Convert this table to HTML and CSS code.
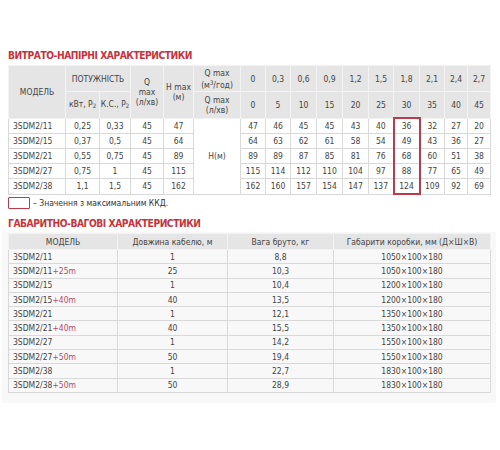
FILE: index.html
```html
<!DOCTYPE html>
<html lang="uk">
<head>
<meta charset="utf-8">
<link rel="stylesheet" href="styles.css">
</head>
<body>
<div class="page">
  <h2 class="title t1">ВИТРАТО-НАПІРНІ ХАРАКТЕРИСТИКИ</h2>
  <table class="perf">
    <colgroup>
      <col style="width:57px"><col style="width:34px"><col style="width:31px"><col style="width:33px"><col style="width:30px"><col style="width:47px">
      <col style="width:25px"><col style="width:25px"><col style="width:26px"><col style="width:26px"><col style="width:26px"><col style="width:25px"><col style="width:26px"><col style="width:25px"><col style="width:23px"><col style="width:23px">
    </colgroup>
    <thead>
      <tr class="h">
        <th rowspan="2">МОДЕЛЬ</th>
        <th colspan="2">ПОТУЖНІСТЬ</th>
        <th rowspan="2">Q<br>max<br>(л/хв)</th>
        <th rowspan="2">H max<br>(м)</th>
        <th>Q max<br>(м<sup>3</sup>/год)</th>
        <th>0</th><th>0,3</th><th>0,6</th><th>0,9</th><th>1,2</th><th>1,5</th><th>1,8</th><th>2,1</th><th>2,4</th><th>2,7</th>
      </tr>
      <tr class="h">
        <th>кВт, P<sub>2</sub></th>
        <th>К.С., P<sub>2</sub></th>
        <th>Q max<br>(л/хв)</th>
        <th>0</th><th>5</th><th>10</th><th>15</th><th>20</th><th>25</th><th>30</th><th>35</th><th>40</th><th>45</th>
      </tr>
    </thead>
    <tbody>
      <tr><td class="m">3SDM2/11</td><td>0,25</td><td>0,33</td><td>45</td><td>47</td><td rowspan="5">H(м)</td><td>47</td><td>46</td><td>45</td><td>45</td><td>43</td><td>40</td><td class="best first">36</td><td>32</td><td>27</td><td>20</td></tr>
      <tr><td class="m">3SDM2/15</td><td>0,37</td><td>0,5</td><td>45</td><td>64</td><td>64</td><td>63</td><td>62</td><td>61</td><td>58</td><td>54</td><td class="best">49</td><td>43</td><td>36</td><td>27</td></tr>
      <tr><td class="m">3SDM2/21</td><td>0,55</td><td>0,75</td><td>45</td><td>89</td><td>89</td><td>89</td><td>87</td><td>85</td><td>81</td><td>76</td><td class="best">68</td><td>60</td><td>51</td><td>38</td></tr>
      <tr><td class="m">3SDM2/27</td><td>0,75</td><td>1</td><td>45</td><td>115</td><td>115</td><td>114</td><td>112</td><td>110</td><td>104</td><td>97</td><td class="best">88</td><td>77</td><td>65</td><td>49</td></tr>
      <tr><td class="m">3SDM2/38</td><td>1,1</td><td>1,5</td><td>45</td><td>162</td><td>162</td><td>160</td><td>157</td><td>154</td><td>147</td><td>137</td><td class="best last">124</td><td>109</td><td>92</td><td>69</td></tr>
    </tbody>
  </table>
  <div class="legend"><span class="lbox"></span><span class="ltext">– Значення з максимальним ККД.</span></div>

  <h2 class="title t2">ГАБАРИТНО-ВАГОВІ ХАРАКТЕРИСТИКИ</h2>
  <div class="card">
    <table class="dims">
      <colgroup><col style="width:109px"><col style="width:110px"><col style="width:106px"><col style="width:157px"></colgroup>
      <thead>
        <tr><th>МОДЕЛЬ</th><th>Довжина кабелю, м</th><th>Вага бруто, кг</th><th>Габарити коробки, мм (Д×Ш×В)</th></tr>
      </thead>
      <tbody>
        <tr><td class="m">3SDM2/11</td><td>1</td><td>8,8</td><td>1050×100×180</td></tr>
        <tr><td class="m">3SDM2/11<span class="plus">+25m</span></td><td>25</td><td>10,3</td><td>1050×100×180</td></tr>
        <tr><td class="m">3SDM2/15</td><td>1</td><td>10,4</td><td>1200×100×180</td></tr>
        <tr><td class="m">3SDM2/15<span class="plus">+40m</span></td><td>40</td><td>13,5</td><td>1200×100×180</td></tr>
        <tr><td class="m">3SDM2/21</td><td>1</td><td>12,1</td><td>1350×100×180</td></tr>
        <tr><td class="m">3SDM2/21<span class="plus">+40m</span></td><td>40</td><td>15,5</td><td>1350×100×180</td></tr>
        <tr><td class="m">3SDM2/27</td><td>1</td><td>14,2</td><td>1550×100×180</td></tr>
        <tr><td class="m">3SDM2/27<span class="plus">+50m</span></td><td>50</td><td>19,4</td><td>1550×100×180</td></tr>
        <tr><td class="m">3SDM2/38</td><td>1</td><td>22,7</td><td>1830×100×180</td></tr>
        <tr><td class="m">3SDM2/38<span class="plus">+50m</span></td><td>50</td><td>28,9</td><td>1830×100×180</td></tr>
      </tbody>
    </table>
  </div>
</div>
</body>
</html>
```
FILE: styles.css
```css
html, body {
  margin: 0;
  padding: 0;
  background: #ffffff;
}
body {
  font-family: "Liberation Sans Narrow", "DejaVu Sans Condensed", "Liberation Sans", sans-serif;
  color: #444444;
}
.page {
  padding: 49px 0 0 0;
}
.title {
  margin: 0 0 0 8px;
  font-size: 10.2px;
  line-height: 14px;
  font-weight: bold;
  color: #c8323c;
  letter-spacing: -0.45px;
}
.t1 { margin-bottom: 2px; }
table {
  border-collapse: collapse;
  table-layout: fixed;
  margin-left: 8px;
  width: 482px;
  font-size: 8.5px;
}
th, td {
  padding: 0;
  text-align: center;
  vertical-align: middle;
  overflow: hidden;
  white-space: nowrap;
}
th {
  font-weight: normal;
  background: #e5e5e5;
  border: 1px solid #f3f3f3;
  line-height: 10px;
}
td {
  border: 1px solid #d9d9d9;
  line-height: 10px;
}
.perf tr.h th { height: 25px; }
.perf tbody td { height: 14px; }
td.m {
  text-align: left;
  padding-left: 4px;
}
sub {
  font-size: 6px;
  vertical-align: -1px;
}
sup {
  font-size: 6px;
  vertical-align: 3px;
}
td.best {
  border-left: 2px solid #c0394a;
  border-right: 2px solid #c0394a;
}
td.best.first { border-top: 2px solid #c0394a; }
td.best.last { border-bottom: 2px solid #c0394a; }
.legend {
  display: flex;
  align-items: center;
  margin: 1px 0 0 8px;
  height: 14px;
}
.lbox {
  width: 20px;
  height: 10px;
  border: 1.5px solid #c0394a;
  border-radius: 1px;
}
.ltext {
  margin-left: 3px;
  font-size: 8.5px;
  color: #333;
}
.t2 {
  margin-top: 7px;
  margin-bottom: 1px;
}
.card {
  background: #f8f8f8;
  margin: 0 4px 0 2px;
  padding: 1px 0 10px 0;
  border-radius: 2px;
}
.dims { margin-left: 6px; }
.dims th { height: 15px; }
.dims tbody td { height: 13.3px; }
.plus { color: #c0475a; }
```
